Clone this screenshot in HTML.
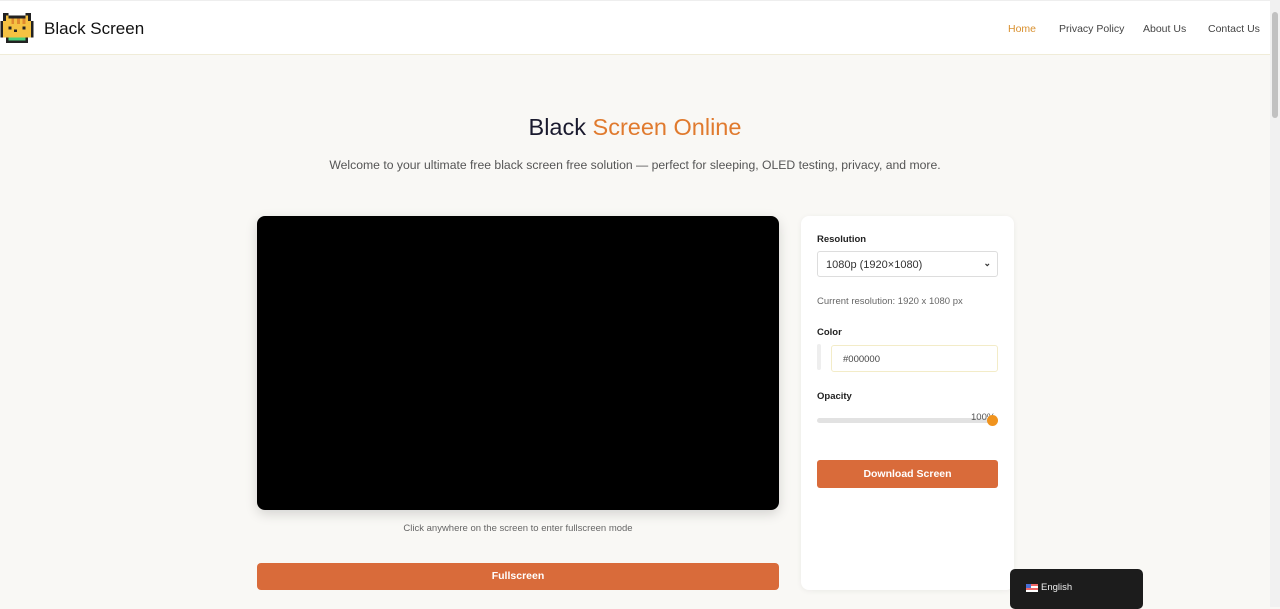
<!DOCTYPE html>
<html><head><meta charset="utf-8"><style>
*{box-sizing:border-box;margin:0;padding:0}
body{width:1280px;height:607px;overflow:hidden;background:#f9f8f5;font-family:"Liberation Sans",sans-serif;position:relative}
.hdr{position:absolute;left:0;top:0;width:1270px;height:55px;background:#fff;border-bottom:1px solid #f0ecd8;border-top:1px solid #eee}
.logo{position:absolute;left:44px;top:18px;font-size:17px;color:#111;font-weight:500}
.nav{position:absolute;top:22px;font-size:10.5px;color:#444}
.sb{position:absolute;right:0;top:0;width:10px;height:607px;background:#f1f1f1}
.sb i{position:absolute;left:2px;top:12px;width:6px;height:106px;background:#c1c1c1;border-radius:3px}
h1{position:absolute;left:0;width:1270px;top:114px;text-align:center;font-size:23.5px;font-weight:500;color:#1a1a2e}
h1 span{color:#e07a2e}
.sub{position:absolute;left:0;width:1270px;top:158px;text-align:center;font-size:12.2px;color:#555}
.scr{position:absolute;left:257px;top:216px;width:522px;height:294px;background:#000;border-radius:8px;box-shadow:0 4px 12px rgba(0,0,0,.15)}
.cap{position:absolute;left:257px;width:522px;top:523px;text-align:center;font-size:9.5px;color:#666}
.fs{position:absolute;left:257px;top:563px;width:522px;height:27px;background:#d96b3a;border-radius:4px;color:#fff;font-size:10.5px;font-weight:bold;text-align:center;line-height:27px}
.pn{position:absolute;left:801px;top:216px;width:213px;height:374px;background:#fff;border-radius:8px;box-shadow:0 1px 6px rgba(0,0,0,.06)}
.lb{position:absolute;left:16px;font-size:9.5px;font-weight:bold;color:#222}
.sel{position:absolute;left:16px;top:35px;width:181px;height:26px;border:1px solid #ddd;border-radius:3px;font-size:11px;color:#333;padding:7px 0 0 8px}
.sel b{position:absolute;right:6px;top:6px;font-size:9px}
.lang{position:absolute;left:1010px;top:569px;width:133px;height:40px;background:#1c1c1c;border-radius:5px;color:#eee;font-size:9.5px}
</style></head><body>
<div class="hdr">
<svg style="position:absolute;left:0;top:9px" width="34" height="36" viewBox="0 0 12 13" shape-rendering="crispEdges">
<rect x="1" y="1" width="1" height="3" fill="#222"/><rect x="10" y="1" width="1" height="3" fill="#222"/>
<rect x="2" y="2" width="8" height="8" fill="#f5c242"/><rect x="1" y="4" width="10" height="6" fill="#f5c242"/>
<rect x="0" y="4" width="1" height="6" fill="#222"/><rect x="11" y="4" width="1" height="6" fill="#222"/>
<rect x="2" y="1" width="1" height="1" fill="#222"/><rect x="9" y="1" width="1" height="1" fill="#222"/>
<rect x="3" y="2" width="6" height="1" fill="#222"/>
<rect x="4" y="3" width="1" height="2" fill="#e0892e"/><rect x="6" y="3" width="1" height="2" fill="#e0892e"/><rect x="8" y="3" width="1" height="2" fill="#e0892e"/>
<rect x="3" y="6" width="1" height="1" fill="#222"/><rect x="8" y="6" width="1" height="1" fill="#222"/><rect x="5" y="7" width="1" height="1" fill="#222"/>
<rect x="2" y="10" width="8" height="2" fill="#222"/><rect x="3" y="10" width="6" height="1" fill="#4ad07a"/>
</svg>
<div class="logo">Black Screen</div>
<div class="nav" style="left:1008px;color:#d9902e">Home</div>
<div class="nav" style="left:1059px">Privacy Policy</div>
<div class="nav" style="left:1143px">About Us</div>
<div class="nav" style="left:1208px">Contact Us</div>
</div>
<div class="sb"><i></i></div>
<h1>Black <span>Screen Online</span></h1>
<div class="sub">Welcome to your ultimate free black screen free solution — perfect for sleeping, OLED testing, privacy, and more.</div>
<div class="scr"></div>
<div class="cap">Click anywhere on the screen to enter fullscreen mode</div>
<div class="fs">Fullscreen</div>
<div class="pn">
<div class="lb" style="top:18px">Resolution</div>
<div class="sel">1080p (1920×1080)<b>⌄</b></div>
<div style="position:absolute;left:16px;top:80px;font-size:9.5px;color:#666">Current resolution: 1920 x 1080 px</div>
<div class="lb" style="top:111px">Color</div>
<div style="position:absolute;left:16px;top:128px;width:4px;height:26px;background:#eee;border-radius:2px"></div>
<div style="position:absolute;left:30px;top:129px;width:167px;height:27px;border:1px solid #f3ecc8;border-radius:3px;font-size:9.5px;color:#444;padding:8px 0 0 11px">#000000</div>
<div class="lb" style="top:175px">Opacity</div>
<div style="position:absolute;left:16px;top:202px;width:181px;height:5px;background:#e2e2e2;border-radius:3px"></div>
<div style="position:absolute;left:170px;top:196px;font-size:9.5px;color:#555">100%</div>
<div style="position:absolute;left:186px;top:199px;width:11px;height:11px;background:#f0931e;border-radius:50%"></div>
<div style="position:absolute;left:16px;top:244px;width:181px;height:28px;background:#d96b3a;border-radius:3px;color:#fff;font-size:10.5px;font-weight:bold;text-align:center;line-height:28px">Download Screen</div>
</div>
<div class="lang"><span style="position:absolute;left:16px;top:15px;width:12px;height:8px;background:linear-gradient(#e66 0 25%,#fff 25% 50%,#e66 50% 75%,#fff 75%)"><i style="position:absolute;left:0;top:0;width:5px;height:4px;background:#4a6fd6"></i></span><span style="position:absolute;left:31px;top:13px">English</span></div>
</body></html>
